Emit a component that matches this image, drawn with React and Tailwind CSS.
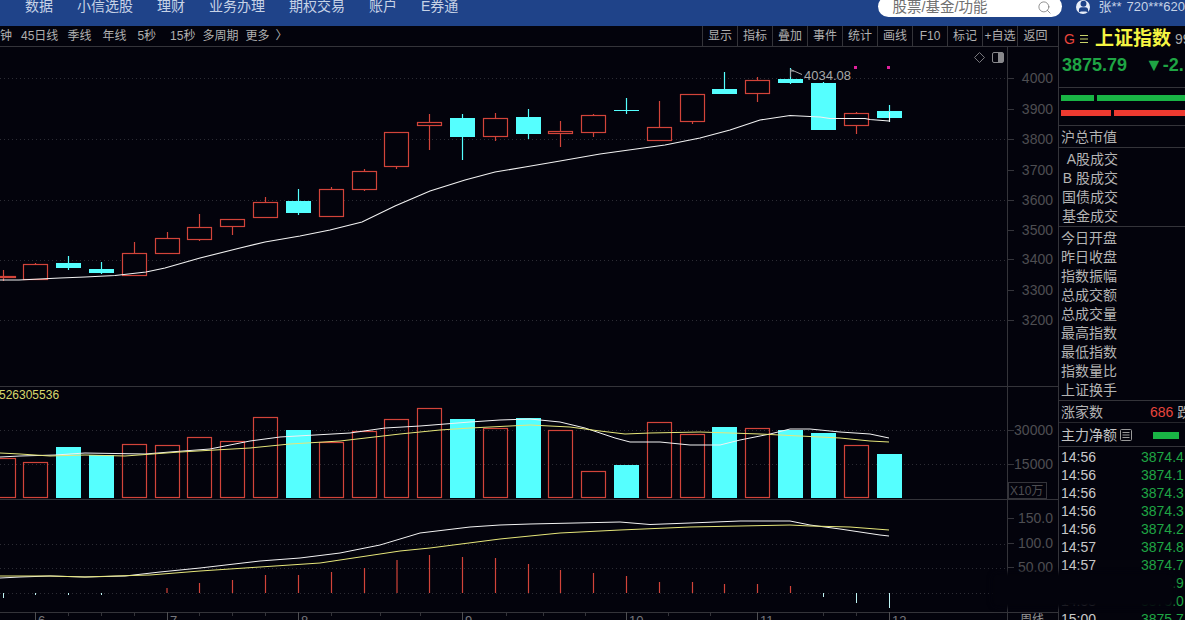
import { Search, User } from "lucide-react";

const NAV = ["数据", "小信选股", "理财", "业务办理", "期权交易", "账户", "E券通"];
const TOOLS = ["显示", "指标", "叠加", "事件", "统计", "画线", "F10", "标记", "+自选", "返回"];
const STATS_A = ["A股成交", "B 股成交", "国债成交", "基金成交"];
const STATS_B = ["今日开盘", "昨日收盘", "指数振幅", "总成交额", "总成交量", "最高指数", "最低指数", "指数量比", "上证换手"];
const TICKS = [
  ["14:56", "3874.4"],
  ["14:56", "3874.1"],
  ["14:56", "3874.3"],
  ["14:56", "3874.3"],
  ["14:56", "3874.2"],
  ["14:57", "3874.8"],
  ["14:57", "3874.7"],
  ["14:57", "3874.9"],
  ["14:58", "3875.0"],
  ["15:00", "3875.7"],
];

const BG = "#03030c";
const RED = "#d2443a";
const CYAN = "#55ffff";
const GRID = "#2c2c34";
const LINE = "#34343a";
const AXIS = "#4e4e52";

// x, open-close top, bottom, wick top, wick bottom, up (red outline) or down (cyan fill)
const CANDLES = [
  [-9, 276, 277, 270, 281, 1],
  [23, 264, 279, 263, 279, 1],
  [56, 263, 267, 256, 270, 0],
  [89, 269, 272, 262, 274, 0],
  [122, 253, 275, 242, 275, 1],
  [155, 238, 253, 232, 253, 1],
  [187, 227, 239, 214, 241, 1],
  [220, 219, 226, 219, 235, 1],
  [253, 202, 217, 197, 217, 1],
  [286, 201, 212, 189, 215, 0],
  [319, 189, 216, 187, 216, 1],
  [352, 171, 189, 169, 191, 1],
  [384, 132, 166, 132, 169, 1],
  [417, 122, 125, 114, 150, 1],
  [450, 118, 136, 114, 160, 0],
  [483, 118, 136, 113, 141, 1],
  [516, 117, 133, 109, 139, 0],
  [548, 131, 133, 121, 147, 1],
  [581, 115, 132, 114, 137, 1],
  [614, 110, 110, 98, 114, 0],
  [647, 127, 140, 101, 140, 1],
  [680, 94, 121, 94, 124, 1],
  [712, 89, 93, 72, 94, 0],
  [745, 80, 93, 77, 102, 1],
  [778, 79, 82, 68, 84, 0],
  [811, 83, 129, 82, 129, 0],
  [844, 113, 125, 112, 134, 1],
  [877, 111, 117, 105, 122, 0],
];

const VOLUMES = [
  [-9, 458, 1], [23, 462, 1], [56, 447, 0], [89, 455, 0], [122, 444, 1], [155, 445, 1], [187, 437, 1],
  [220, 441, 1], [253, 417, 1], [286, 430, 0], [319, 442, 1], [352, 431, 1], [384, 419, 1], [417, 408, 1],
  [450, 419, 0], [483, 428, 1], [516, 418, 0], [548, 430, 1], [581, 471, 1], [614, 465, 0], [647, 422, 1],
  [680, 434, 1], [712, 427, 0], [745, 428, 1], [778, 430, 0], [811, 433, 0], [844, 445, 1], [877, 454, 0],
];

const MA =
  "0,280 19,280 60,278 85,277 115,275.5 146,272 165,268 200,258 240,248 265,242 300,236 330,230 362,222 395,206 430,191 465,180 495,172 525,167 560,161 600,154 665,145 700,138 730,130 760,120 790,115.5 800,116 820,117 830,118.5 865,118.5 870,119.5 889,121";
const VOL_WHITE =
  "0,457 20,456 55,455 85,453 145,454 170,452 210,449 250,441 280,437 350,433 385,428 420,426 470,422 500,420 530,419 560,422 585,428 615,438 630,442 660,442 690,445 720,445 740,440 770,434 790,429 810,429 840,432 870,434 889,438";
const VOL_YELLOW =
  "0,453 20,454 50,456 85,455 125,456 180,452 250,448 290,444 340,441 400,434 440,430 470,428 530,425 570,427 600,431 625,434 650,433 700,432 760,434 800,436 840,438 870,441 889,442";
const MACD_WHITE =
  "0,578 20,577 50,576 85,577 125,576 160,572 200,568 260,561 300,558 340,553 380,545 420,533 470,527 500,525 530,524 620,522 650,524.5 690,523 740,521 790,521 810,525 840,529 880,535 889,536";
const MACD_YELLOW =
  "0,576 50,576 85,577 115,576 150,575 200,571 260,567 320,563 400,551 430,548 500,539 560,533 620,530 690,527 740,526 790,525 810,526 850,527 889,530";

const HIST = [
  [167, 588], [199.5, 583], [232.5, 580], [265.5, 575], [298.5, 575], [331.5, 572], [364.5, 568], [397, 560],
  [429.5, 555], [462.5, 557], [495.5, 558], [528.5, 564], [560.5, 570], [593.5, 573], [626.5, 576], [659.5, 582],
  [692.5, 582], [724.5, 584], [757.5, 584], [790.5, 586],
];
const HIST_DOWN = [[3.5, 598], [35.5, 595], [68.5, 595], [101.5, 595], [823.5, 597], [856.5, 603], [889.5, 608]];

const MAIN_LABELS = [[4000, 78], [3900, 109], [3800, 139], [3700, 170], [3600, 200], [3500, 230], [3400, 259], [3300, 290], [3200, 320]];
const LOWER_LABELS = [["30000", 430], ["15000", 464], ["150.0", 518], ["100.0", 543], ["50.00", 567]];
const GRID_LINES = [78.5, 139.5, 200.5, 260.5, 320.5, 430.5, 464.5, 544.5, 568.5, 593.5];
const DATES = [["6", 35], ["7", 167], ["8", 298], ["9", 462], ["10", 626], ["11", 757], ["12", 889]];
const MINOR_DATES = [68, 101, 134, 199, 232, 265, 331, 380, 420, 506, 543, 585, 668, 710, 823, 856];

function KlineChart() {
  return (
    <svg viewBox="0 47 1058 573" className="block h-[573px] w-[1058px]" fontFamily="Liberation Sans, Noto Sans CJK SC, sans-serif">
      {GRID_LINES.map((y) => (
        <line key={y} x1="0" x2="1007" y1={y} y2={y} stroke={GRID} strokeDasharray="1 3" />
      ))}
      <line x1="0" x2="1058" y1="386.5" y2="386.5" stroke={LINE} />
      <line x1="0" x2="1058" y1="499.5" y2="499.5" stroke={LINE} />
      <line x1="0" x2="1058" y1="612.5" y2="612.5" stroke={LINE} />
      <line x1="1007.5" x2="1007.5" y1="47" y2="620" stroke={LINE} />

      {MAIN_LABELS.map(([label, y]) => (
        <g key={label}>
          <line x1="1007" x2="1014" y1={y + 0.5} y2={y + 0.5} stroke={LINE} />
          <text x="1053" y={y + 5} textAnchor="end" fontSize="14" fill={AXIS}>{label}</text>
        </g>
      ))}
      {LOWER_LABELS.map(([label, y]) => (
        <g key={label}>
          <line x1="1007" x2="1014" y1={y + 0.5} y2={y + 0.5} stroke={LINE} />
          <text x="1053" y={y + 5} textAnchor="end" fontSize="14" fill={AXIS}>{label}</text>
        </g>
      ))}
      <rect x="1008.5" y="482.5" width="38" height="16" fill="none" stroke={LINE} />
      <text x="1010" y="495" fontSize="12" fill={AXIS}>X10万</text>

      {/* candles */}
      {CANDLES.map(([x, top, bottom, wickTop, wickBottom, up]) => (
        <g key={x}>
          <line
            x1={x + 12.5}
            x2={x + 12.5}
            y1={wickTop}
            y2={wickBottom}
            stroke={up ? RED : CYAN}
            strokeWidth="1.2"
          />
          {up ? (
            <rect x={x + 0.5} y={top + 0.5} width="24" height={bottom - top} fill={BG} stroke={RED} strokeWidth="1.2" />
          ) : (
            <rect x={x} y={top} width="25" height={bottom - top + 1} fill={CYAN} />
          )}
        </g>
      ))}
      <polyline points={MA} fill="none" stroke="#f2f2f2" strokeWidth="1.1" />
      <line x1="889.5" x2="889.5" y1="112" y2="122" stroke="#f2f2f2" />

      {/* high price flag */}
      <path d="M790.5 77V69.5L802 74.5M790.5 71H794" fill="none" stroke="#a8a8a8" />
      <text x="804" y="80" fontSize="13" fill="#a8a8a8">4034.08</text>
      <rect x="854" y="66" width="3" height="3" fill="#e0209c" />
      <rect x="887" y="66" width="3" height="3" fill="#e0209c" />
      <path d="M979.5 52.5L984.5 57.5L979.5 62.5L974.5 57.5Z" fill="none" stroke="#77777c" />
      <rect x="992.5" y="52.5" width="11" height="10" rx="1.5" fill="none" stroke="#88888c" />
      <rect x="998" y="53" width="5" height="9" fill="#88888c" />

      {/* volume */}
      <text x="-1" y="399" fontSize="12" fill="#d8d86c">526305536</text>
      {VOLUMES.map(([x, top, up]) =>
        up ? (
          <rect key={x} x={x + 0.5} y={top + 0.5} width="24" height={497 - top} fill="none" stroke={RED} strokeWidth="1.2" />
        ) : (
          <rect key={x} x={x} y={top} width="25" height={498 - top} fill={CYAN} />
        )
      )}
      <polyline points={VOL_WHITE} fill="none" stroke="#f2f2f2" />
      <polyline points={VOL_YELLOW} fill="none" stroke="#e6e67a" />

      {/* macd */}
      <polyline points={MACD_WHITE} fill="none" stroke="#f2f2f2" />
      <polyline points={MACD_YELLOW} fill="none" stroke="#e6e67a" />
      {HIST.map(([x, top]) => (
        <line key={x} x1={x} x2={x} y1={top} y2="593" stroke={RED} strokeWidth="1.2" />
      ))}
      {HIST_DOWN.map(([x, bottom]) => (
        <line key={x} x1={x} x2={x} y1="593" y2={bottom} stroke="#bff5f5" />
      ))}

      {/* dates */}
      {MINOR_DATES.map((x) => (
        <line key={x} x1={x + 0.5} x2={x + 0.5} y1="612" y2="616" stroke={LINE} />
      ))}
      {DATES.map(([label, x]) => (
        <g key={label}>
          <line x1={x + 0.5} x2={x + 0.5} y1="612" y2="620" stroke={AXIS} />
          <text x={x + 3} y="625" fontSize="13" fill="#77777c">{label}</text>
        </g>
      ))}
      <text x="1020" y="624" fontSize="12" fill="#9a9a9a">周线</text>
    </svg>
  );
}

function SidePanel() {
  return (
    <div className="relative flex h-full w-[127px] flex-col overflow-hidden border-l border-[#34343a] text-[14px] text-[#b4b4b4]">
      {/* title */}
      <div className="flex h-[26px] shrink-0 items-center whitespace-nowrap pl-[5px]">
        <span className="w-[16px] shrink-0 text-[14px] text-[#e8453c]">G</span>
        <svg width="8" height="10" viewBox="0 0 8 10" className="shrink-0" fill="none" stroke="#c9d36a">
          <path d="M0 1.5H8M0 5H8M0 8.5H8" />
        </svg>
        <span className="ml-[7px] shrink-0 text-[19px] font-bold text-[#f5f542]">上证指数</span>
        <span className="ml-1 shrink-0 text-[14px] text-[#aaaaaa]">99</span>
      </div>
      <div className="flex h-[36px] shrink-0 items-start whitespace-nowrap border-b border-[#34343a] pl-[3px] pt-[1px] text-[18px] font-bold leading-[24px] text-[#1fa544]">
        <span className="w-[83px] shrink-0">3875.79</span>
        <span className="shrink-0">▼-2.</span>
      </div>

      {/* buy and sell bars */}
      <div className="flex h-[38px] shrink-0 flex-col gap-[9px] border-b border-[#34343a] pl-[2px] pt-[7px]">
        <div className="flex gap-[3px]">
          <div className="h-[6px] w-[33px] bg-[#19b445]" />
          <div className="h-[6px] flex-1 bg-[#19b445]" />
        </div>
        <div className="flex gap-[3px]">
          <div className="h-[6px] w-[50px] bg-[#ee3a30]" />
          <div className="h-[6px] flex-1 bg-[#ee3a30]" />
        </div>
      </div>

      <div className="h-[22px] shrink-0 border-b border-[#34343a] pl-[2px] pt-[1px] leading-[21px]">沪总市值</div>

      <div className="h-[79px] shrink-0 border-b border-[#34343a] pt-[2px]">
        {STATS_A.map((label) => (
          <div key={label} className="h-[19px] w-[59px] text-right leading-[19px]">{label}</div>
        ))}
      </div>

      <div className="h-[174px] shrink-0 border-b border-[#34343a] pl-[2px] pt-[2px]">
        {STATS_B.map((label) => (
          <div key={label} className="h-[19px] leading-[19px]">{label}</div>
        ))}
      </div>

      <div className="flex h-[22px] shrink-0 items-center whitespace-nowrap border-b border-[#26262c] pl-[2px] pt-[1px]">
        <span className="w-[89px] shrink-0">涨家数</span>
        <span className="shrink-0 text-[#e8453c]">686</span>
        <span className="ml-[4px] shrink-0">跌</span>
      </div>

      <div className="flex h-[24px] shrink-0 items-center whitespace-nowrap border-b border-[#34343a] pl-[2px] pt-[1px] text-[#c4c4c4]">
        <span>主力净额</span>
        <svg width="12" height="12" viewBox="0 0 12 12" className="ml-[3px]" fill="none" stroke="#9a9a9a">
          <rect x="0.5" y="0.5" width="11" height="11" rx="1" />
          <path d="M2.5 3.5H9.5M2.5 6H9.5M2.5 8.5H9.5" />
        </svg>
        <div className="ml-[21px] h-[7px] w-[26px] bg-[#19b445]" />
      </div>

      <div className="shrink-0 pt-[1px]">
        {TICKS.map(([time, price]) => (
          <div key={price} className="flex h-[18px] items-center whitespace-nowrap pl-[2px] text-[14px]">
            <span className="w-[80px] shrink-0 text-[#c8c8c8]">{time}</span>
            <span className="shrink-0 text-[#1fa544]">{price}</span>
          </div>
        ))}
      </div>
    </div>
  );
}

export default function App() {
  return (
    <div className="relative flex h-[620px] w-[1185px] flex-col overflow-hidden bg-[#03030c] font-['Liberation_Sans','Noto_Sans_CJK_SC',sans-serif]">
      {/* top nav */}
      <header className="flex h-[26px] shrink-0 items-start justify-between overflow-hidden bg-[#1f4389] text-[14px] text-[#c6d2e6]">
        <nav className="-mt-[4px] flex gap-6 pl-[25px] leading-[20px]">
          {NAV.map((item) => (
            <span key={item}>{item}</span>
          ))}
        </nav>
        <div className="-mt-[4px] flex items-center">
          <div className="flex h-[21px] w-[184px] items-center justify-between rounded-full bg-white pl-[14px] pr-[10px] pt-[2px] text-[14.5px] text-[#707070]">
            <span>股票/基金/功能</span>
            <Search size={15} strokeWidth={1.2} />
          </div>
          <div className="ml-[14px] flex h-[14px] w-[14px] items-center justify-center overflow-hidden rounded-full bg-[#e8eef8] text-[#1f4389]">
            <User size={13} strokeWidth={3} fill="#1f4389" />
          </div>
          <span className="ml-[8px] w-[28px] whitespace-nowrap text-[13px]">张**</span>
          <span className="whitespace-nowrap text-[13px]">720***620</span>
        </div>
      </header>

      <div className="flex min-h-0 flex-1">
        <main className="w-[1058px] shrink-0">
          {/* period toolbar */}
          <div className="flex h-[21px] items-center justify-between border-b border-[#34343a] text-[12px] text-[#b0b0b0]">
            <div className="flex items-center whitespace-nowrap">
              <span>钟</span>
              <span className="ml-[9px]">45日线</span>
              <span className="ml-[9px]">季线</span>
              <span className="ml-[11px]">年线</span>
              <span className="ml-[11px]">5秒</span>
              <span className="ml-[14px]">15秒</span>
              <span className="ml-[7px]">多周期</span>
              <span className="ml-[7px]">更多</span>
              <span className="ml-[6px]">〉</span>
            </div>
            <div className="mr-[5px] flex h-full border-l border-[#34343a]">
              {TOOLS.map((tool, i) => (
                <span
                  key={tool}
                  className={
                    i === TOOLS.length - 1
                      ? "flex w-[35px] items-center justify-center whitespace-nowrap"
                      : "flex w-[35px] items-center justify-center whitespace-nowrap border-r border-[#34343a]"
                  }
                >
                  {tool}
                </span>
              ))}
            </div>
          </div>
          <KlineChart />
        </main>
        <SidePanel />
      </div>

      {/* smudged watermark over the bottom right */}
      <div className="absolute bottom-[12px] right-[10px] h-[36px] w-[184px] rounded-[8px] bg-[#03030c] blur-[2px]" />
    </div>
  );
}
